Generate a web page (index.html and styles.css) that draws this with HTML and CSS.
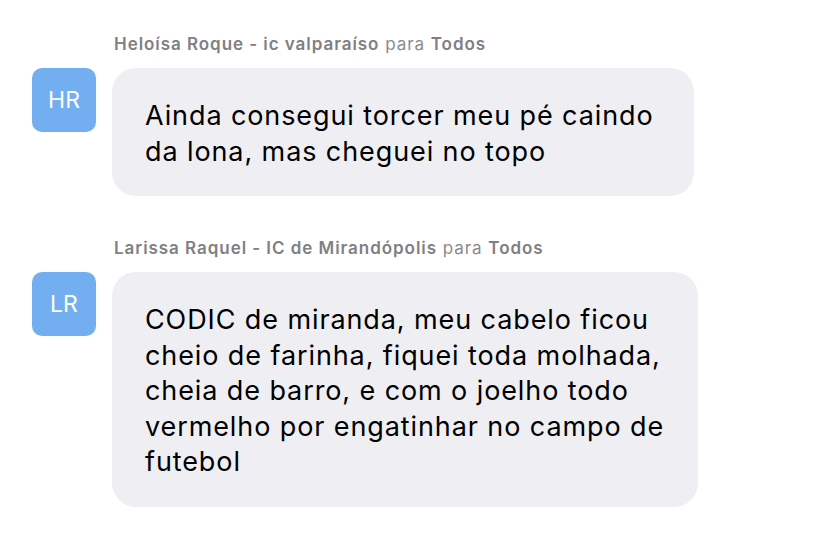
FILE: index.html
```html
<!DOCTYPE html>
<html lang="pt-BR">
<head>
    <meta charset="UTF-8">
    <meta name="viewport" content="width=device-width, initial-scale=1.0">
    <title>Chat</title>
    <link rel="stylesheet" href="styles.css">
</head>
<body>
    <div class="chat">
        <div class="message">
            <div class="sender">
                <span class="strong">Heloísa Roque - ic valparaíso</span> para <span class="strong">Todos</span>
            </div>
            <div class="row">
                <div class="avatar">HR</div>
                <div class="bubble bubble-one">Ainda consegui torcer meu pé caindo<br>da lona, mas cheguei no topo</div>
            </div>
        </div>

        <div class="message">
            <div class="sender">
                <span class="strong">Larissa Raquel - IC de Mirandópolis</span> para <span class="strong">Todos</span>
            </div>
            <div class="row">
                <div class="avatar">LR</div>
                <div class="bubble bubble-two">CODIC de miranda, meu cabelo ficou<br>cheio de farinha, fiquei toda molhada,<br>cheia de barro, e com o joelho todo<br>vermelho por engatinhar no campo de<br>futebol</div>
            </div>
        </div>
    </div>
</body>
</html>
```

FILE: styles.css
```css
body {
    font-family: Inter, "Liberation Sans", sans-serif;
    margin: 0;
    padding: 0;
    background-color: #fff;
    color: #000;
}
.chat {
    padding: 32px 0 0 32px;
    display: flex;
    flex-direction: column;
    gap: 40px;
}
.sender {
    margin-left: 82px;
    font-size: 17px;
    line-height: 24px;
    letter-spacing: 0.95px;
    color: #8a8a8e;
    margin-bottom: 12px;
}
.strong {
    font-weight: 600;
    color: #7f7f84;
}
.row {
    display: flex;
    gap: 16px;
    align-items: flex-start;
}
.avatar {
    width: 64px;
    height: 64px;
    border-radius: 10px;
    background-color: #72aef0;
    color: white;
    font-size: 23px;
    display: flex;
    justify-content: center;
    align-items: center;
}
.bubble {
    background-color: #efeff3;
    border-radius: 24px;
    padding: 30px 33px 27px;
    font-size: 27px;
    line-height: 35.5px;
    letter-spacing: 0.9px;
    box-sizing: border-box;
}
.bubble-one {
    width: 582px;
}
.bubble-two {
    width: 586px;
}
```
